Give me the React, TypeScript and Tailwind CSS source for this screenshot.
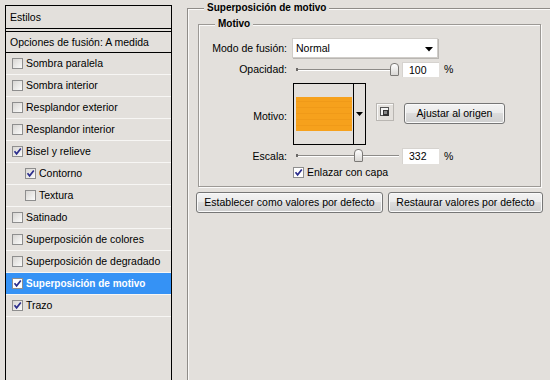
import React from "react";

const BG = "bg-[#e3e0dc]";

function Check({ checked, white }: { checked?: boolean; white?: boolean }) {
  return (
    <div
      className={`w-[11px] h-[11px] shrink-0 border border-[#8e8e8e] ${
        white ? "bg-white" : "bg-gradient-to-br from-[#d8d6d3] to-[#fbfbfa]"
      } flex items-center justify-center`}
    >
      {checked && (
        <svg width="9" height="9" viewBox="0 0 9 9">
          <path d="M1.5 4.2 L3.6 6.8 L7.8 1.5" stroke="#2b2d8c" strokeWidth="1.7" fill="none" />
        </svg>
      )}
    </div>
  );
}

function Row({
  label,
  checked,
  indent,
  active,
}: {
  label: string;
  checked?: boolean;
  indent?: boolean;
  active?: boolean;
}) {
  return (
    <div className="h-[22px] border-b border-[#f7f6f4] flex">
      <div
        className={`flex-1 flex items-center ${indent ? "pl-[19px]" : "pl-[6px]"} ${
          active ? "bg-[#3592f5] text-white font-bold text-[10px]" : ""
        }`}
      >
        <Check checked={checked} white={active} />
        <span className="ml-[3px] whitespace-nowrap">{label}</span>
      </div>
    </div>
  );
}

function Slider({ pos }: { pos: number }) {
  return (
    <div className="relative w-[103px] h-full ml-[4px]">
      <div className="absolute left-0 right-0 top-[7px] h-[2px] border-t border-[#8d8b88] border-b border-b-white" />
      <div className="absolute left-0 top-[6px] w-[2px] h-[3px] bg-[#6a6866]" />
      <div
        className="absolute top-[1px] w-[9px] h-[13px] rounded-t-[4px] rounded-b-[1px] border border-[#7b7976] bg-gradient-to-b from-white to-[#d9d7d4]"
        style={{ left: pos }}
      />
    </div>
  );
}

function Btn({ children, w }: { children: React.ReactNode; w: string }) {
  return (
    <div
      className={`${w} h-[21px] rounded-[3px] border border-[#767676] flex items-center justify-center whitespace-nowrap bg-[linear-gradient(#f3f3f3,#ebebeb_45%,#dcdcdc_50%,#cfcfcf)] shadow-[inset_0_0_0_1px_#fafafa]`}
    >
      {children}
    </div>
  );
}

export default function App() {
  return (
    <div
      className={`w-[550px] h-[380px] overflow-hidden ${BG} flex font-['Liberation_Sans',Arial,sans-serif] text-[10.5px] text-black leading-none`}
    >
      {/* Left list */}
      <div className="ml-[5px] mt-[5px] w-[167px] h-[400px] border border-black flex flex-col shrink-0">
        <div className="h-[23px] border-b border-black flex items-center pl-[4px]">Estilos</div>
        <div className="h-[2px]" />
        <div className="h-[22px] border-y border-black flex items-center pl-[4px] whitespace-nowrap">
          Opciones de fusión: A medida
        </div>
        <Row label="Sombra paralela" />
        <Row label="Sombra interior" />
        <Row label="Resplandor exterior" />
        <Row label="Resplandor interior" />
        <Row label="Bisel y relieve" checked />
        <Row label="Contorno" checked indent />
        <Row label="Textura" indent />
        <Row label="Satinado" />
        <Row label="Superposición de colores" />
        <Row label="Superposición de degradado" />
        <Row label="Superposición de motivo" checked active />
        <Row label="Trazo" checked />
      </div>

      {/* Right side */}
      <div className="ml-[15px] mt-[8px] shrink-0">
        <div className="relative w-[380px] h-[400px] border-l border-t border-[#8f8c88] shadow-[inset_1px_1px_0_#fbfaf9]">
          <span className={`absolute left-[16px] top-[-6px] px-[3px] ${BG} font-bold text-[10px] whitespace-nowrap`}>
            Superposición de motivo
          </span>

          {/* Inner group */}
          <div className="ml-[10px] mt-[15px] relative w-[343px] h-[163px] border border-[#9c9995] shadow-[inset_1px_1px_0_#fbfaf9,1px_1px_0_#fbfaf9]">
            <span className={`absolute left-[16px] top-[-6px] px-[3px] ${BG} font-bold text-[10px]`}>Motivo</span>

            <div className="flex flex-col pt-[13px]">
              {/* Modo de fusión */}
              <div className="flex items-center h-[20px]">
                <div className="w-[88px] text-right whitespace-nowrap">Modo de fusión:</div>
                <div className="ml-[5px] w-[146px] h-[20px] bg-white border border-[#d0cdc9] shadow-[1px_1px_0_#b9b6b2] flex items-center pl-[3px] relative">
                  <span>Normal</span>
                  <svg className="absolute right-[4px] top-[8px]" width="8" height="5" viewBox="0 0 8 5">
                    <path d="M0 0 H8 L4 4.5 Z" fill="#000" />
                  </svg>
                </div>
              </div>

              {/* Opacidad */}
              <div className="flex items-center h-[15px] mt-[4px]">
                <div className="w-[88px] text-right">Opacidad:</div>
                <div className="ml-[5px] h-full flex items-center">
                  <Slider pos={94} />
                  <div className="ml-[3px] w-[37px] h-[15px] bg-white border-t border-l border-[#d6d3cf] flex items-center pl-[6px]">
                    100
                  </div>
                  <span className="ml-[5px]">%</span>
                </div>
              </div>

              {/* Motivo */}
              <div className="flex h-[62px] mt-[6px]">
                <div className="w-[88px] text-right pt-[28px]">Motivo:</div>
                <div className="ml-[6px] w-[73px] h-[62px] border border-black flex bg-[#e3e0dc]">
                  <div className="w-[60px] h-full border-r border-black pl-[2px] pt-[13px]">
                    <div className="w-[56px] h-[34px] bg-[#f6a11c] bg-[repeating-linear-gradient(0deg,#f6a11c_0px,#f6a11c_5px,#f09a18_5px,#f09a18_6px)]" />
                  </div>
                  <div className="flex-1 flex items-center justify-center">
                    <svg width="7" height="4" viewBox="0 0 7 4">
                      <path d="M0 0 H7 L3.5 4 Z" fill="#000" />
                    </svg>
                  </div>
                </div>
                <div className="ml-[10px] mt-[20px] w-[18px] h-[18px] border border-[#b9b6b2] shadow-[inset_1px_1px_0_#fafafa] flex items-center justify-center">
                  <svg width="10" height="10" viewBox="0 0 10 10">
                    <rect x="0.5" y="0.5" width="8" height="8" fill="#f4f4f4" stroke="#555" />
                    <rect x="3" y="3" width="6" height="6" fill="#333" />
                    <rect x="4" y="4" width="3" height="3" fill="#888" />
                  </svg>
                </div>
                <div className="ml-[10px] mt-[20px]">
                  <Btn w="w-[101px]">Ajustar al origen</Btn>
                </div>
              </div>

              {/* Escala */}
              <div className="flex items-center h-[16px] mt-[3px]">
                <div className="w-[88px] text-right">Escala:</div>
                <div className="ml-[5px] h-full flex items-center">
                  <Slider pos={58} />
                  <div className="ml-[3px] w-[37px] h-[16px] bg-white border-t border-l border-[#d6d3cf] flex items-center pl-[6px]">
                    332
                  </div>
                  <span className="ml-[5px]">%</span>
                </div>
              </div>

              {/* Enlazar */}
              <div className="flex items-center h-[12px] mt-[2px]">
                <div className="w-[88px]" />
                <div className="ml-[6px] flex items-center">
                  <Check checked white />
                  <span className="ml-[3px] whitespace-nowrap">Enlazar con capa</span>
                </div>
              </div>
            </div>
          </div>

          {/* Buttons */}
          <div className="flex mt-[5px] ml-[8px]">
            <Btn w="w-[187px]">Establecer como valores por defecto</Btn>
            <div className="ml-[5px]">
              <Btn w="w-[155px]">Restaurar valores por defecto</Btn>
            </div>
          </div>
        </div>
      </div>
    </div>
  );
}
